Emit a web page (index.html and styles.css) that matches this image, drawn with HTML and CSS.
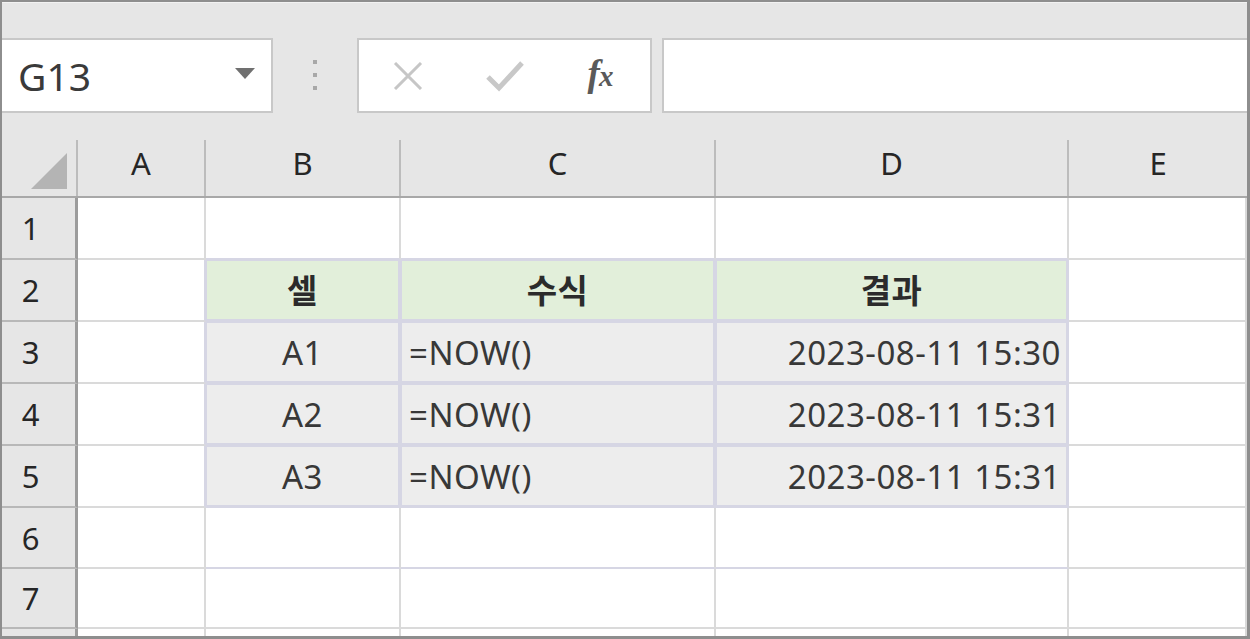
FILE: index.html
```html
<!DOCTYPE html>
<html>
<head lang="ko">
    <meta charset="UTF-8">
    <title>NOW 함수</title>
    <link rel="stylesheet" href="styles.css">
</head>
<body>
<div class="frame">
    <div class="toolbar">
        <div class="namebox">
            <span class="name">G13</span>
            <span class="drop"></span>
        </div>
        <div class="dots">
            <i></i><i></i><i></i>
        </div>
        <div class="btns">
            <span class="btn">
                <svg width="30" height="28" viewBox="0 0 30 28"><path d="M2 1 L28 27 M28 1 L2 27" stroke="#c6c6c6" stroke-width="3" fill="none"/></svg>
            </span>
            <span class="btn">
                <svg width="38" height="32" viewBox="0 0 38 32"><path d="M2 17 L13 28 L36 3" stroke="#c8c8c8" stroke-width="5" fill="none"/></svg>
            </span>
            <span class="btn"><span class="fx">f<em>x</em></span></span>
        </div>
        <div class="formula"></div>
    </div>
    <div class="sheet">
        <div class="hd corner"><div class="in">
            <svg width="38" height="38" viewBox="0 0 38 38"><polygon points="37,1 37,37 1,37" fill="#b4b4b4"/></svg>
        </div></div>
        <div class="hd"><div class="in">A</div></div>
        <div class="hd"><div class="in">B</div></div>
        <div class="hd"><div class="in">C</div></div>
        <div class="hd"><div class="in">D</div></div>
        <div class="hd"><div class="in last">E</div></div>

        <div class="rh">1</div>
        <div class="c"></div><div class="c top"></div><div class="c top"></div><div class="c top"></div><div class="c"></div>

        <div class="rh">2</div>
        <div class="c side"></div>
        <div class="c t th">셀</div>
        <div class="c t th">수식</div>
        <div class="c t th">결과</div>
        <div class="c"></div>

        <div class="rh">3</div>
        <div class="c side"></div>
        <div class="c t td mid">A1</div>
        <div class="c t td">=NOW()</div>
        <div class="c t td num">2023-08-11 15:30</div>
        <div class="c"></div>

        <div class="rh">4</div>
        <div class="c side"></div>
        <div class="c t td mid">A2</div>
        <div class="c t td">=NOW()</div>
        <div class="c t td num">2023-08-11 15:31</div>
        <div class="c"></div>

        <div class="rh">5</div>
        <div class="c side"></div>
        <div class="c t td mid">A3</div>
        <div class="c t td">=NOW()</div>
        <div class="c t td num">2023-08-11 15:31</div>
        <div class="c"></div>

        <div class="rh">6</div>
        <div class="c"></div><div class="c top"></div><div class="c top"></div><div class="c top"></div><div class="c"></div>

        <div class="rh">7</div>
        <div class="c"></div><div class="c"></div><div class="c"></div><div class="c"></div><div class="c"></div>

        <div class="rh"></div>
        <div class="c"></div><div class="c"></div><div class="c"></div><div class="c"></div><div class="c"></div>
    </div>
</div>
</body>
</html>
```

FILE: styles.css
```css
body, div, span, em {
    margin: 0;
    padding: 0;
}
body {
    background: #fff;
    font-family: "Noto Sans", "Noto Sans CJK KR", sans-serif;
}
.frame {
    width: 1250px;
    height: 639px;
    box-sizing: border-box;
    border: 2px solid #8e8e8e;
    border-right-width: 3px;
    border-bottom-width: 3px;
    background: #e6e6e6;
    overflow: hidden;
}
.toolbar {
    height: 111px;
    box-sizing: border-box;
    padding-top: 7px;
    border-top: 1px solid #f2f2f2;
    display: flex;
    align-items: flex-end;
}
.namebox, .btns, .formula {
    height: 75px;
    box-sizing: border-box;
    background: #fff;
    border: 2px solid #c8c8c8;
}
.namebox {
    width: 271px;
    border-left: 0;
    display: flex;
    align-items: center;
    justify-content: space-between;
    padding: 0 16px 0 16px;
}
.name {
    font-size: 39px;
    color: #3a3a3a;
    line-height: 1;
    margin-top: -1px;
}
.drop {
    width: 0;
    height: 0;
    border-left: 10px solid transparent;
    border-right: 10px solid transparent;
    border-top: 11px solid #707070;
    margin-top: -4px;
}
.dots {
    width: 84px;
    height: 75px;
    display: flex;
    flex-direction: column;
    align-items: center;
    justify-content: center;
    gap: 9px;
    padding-bottom: 2px;
    box-sizing: border-box;
}
.dots i {
    width: 4px;
    height: 4px;
    background: #a8a8a8;
}
.btns {
    width: 295px;
    display: flex;
}
.btn {
    flex: 1;
    display: flex;
    align-items: center;
    justify-content: center;
}
.fx {
    font-family: "Liberation Serif", "DejaVu Serif", serif;
    font-style: italic;
    font-weight: bold;
    font-size: 37px;
    line-height: 1;
    color: #5a5a5a;
    padding-bottom: 4px;
    padding-right: 2px;
}
.fx em {
    font-size: 29px;
    margin-left: -1px;
}
.formula {
    flex: 1;
    margin-left: 10px;
    border-right: 0;
}

.sheet {
    display: grid;
    grid-template-columns: 76px 128px 195px 315px 353px 1fr;
    grid-template-rows: 85px 62px 62px 62px 62px 62px 61px 60px 20px;
}
.sheet > div {
    box-sizing: border-box;
}
.hd {
    border-bottom: 2px solid #a8a8a8;
    display: flex;
    align-items: flex-end;
}
.hd .in {
    width: 100%;
    height: 56px;
    border-right: 2px solid #bcbcbc;
    display: flex;
    align-items: center;
    justify-content: center;
    padding-bottom: 10px;
    box-sizing: border-box;
    font-size: 31px;
    color: #262626;
}
.hd .in.last {
    border-right: 0;
}
.corner .in {
    align-items: flex-end;
    justify-content: flex-end;
    padding: 0 8px 6px 0;
}
.corner svg {
    display: block;
}
.rh {
    background: #e6e6e6;
    border-right: 3px solid #9c9c9c;
    border-bottom: 2px solid #b8b8b8;
    display: flex;
    align-items: center;
    justify-content: center;
    font-size: 31px;
    color: #262626;
    padding-right: 16px;
}
.c {
    background: #fff;
    border-right: 2px solid #dadada;
    border-bottom: 2px solid #dadada;
    display: flex;
    align-items: center;
    font-size: 33px;
    letter-spacing: 0.5px;
    color: #383838;
    white-space: nowrap;
}
.c.top {
    border-bottom-color: #d6d6e4;
}
.c.side {
    border-right-color: #d6d6e4;
}
.t {
    border-right: 2px solid #d6d6e4;
    border-bottom: 2px solid #d6d6e4;
    box-shadow: inset 0 0 0 1px #d6d6e4;
}
.th {
    background: #e2efda;
    justify-content: center;
    font-weight: bold;
    color: #2b2b2b;
    padding-bottom: 3px;
}
.td {
    background: #ededed;
    padding-left: 8px;
}
.td.mid {
    justify-content: center;
    padding-left: 0;
}
.td.num {
    justify-content: flex-end;
    padding-left: 0;
    padding-right: 6px;
}
```
